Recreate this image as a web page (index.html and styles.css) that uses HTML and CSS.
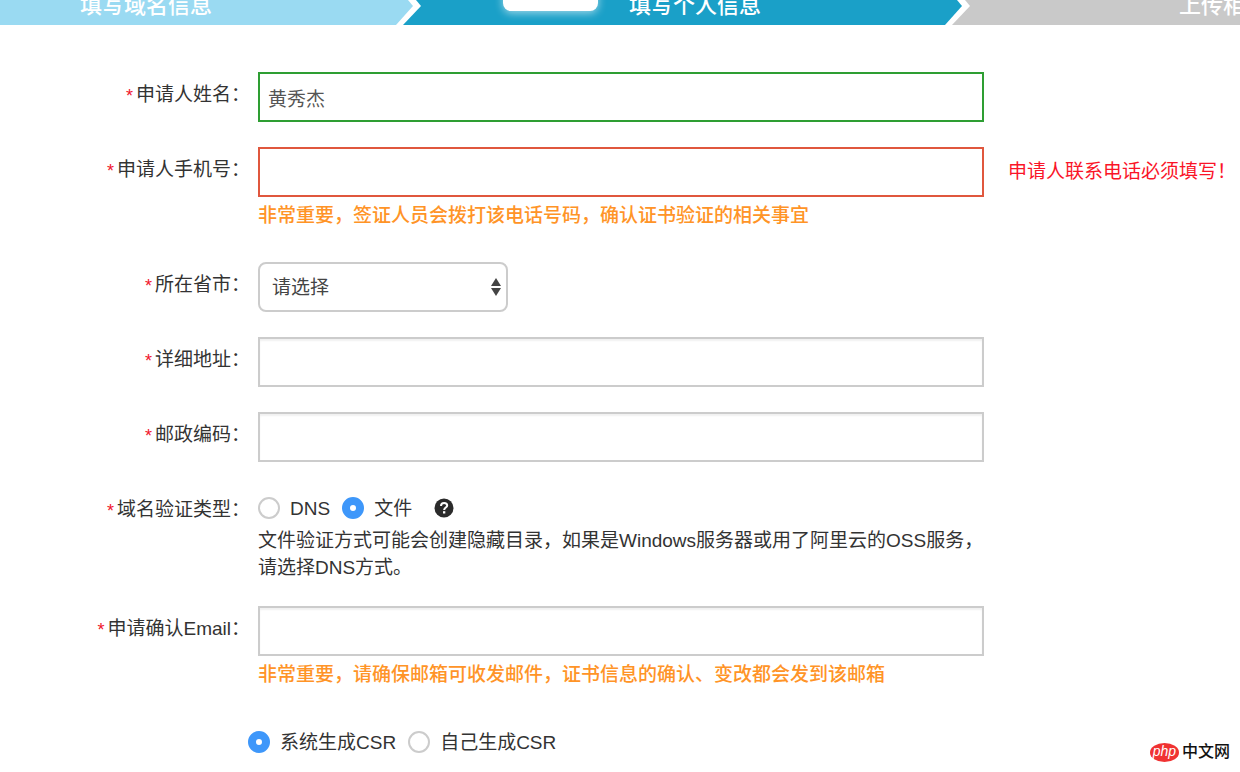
FILE: index.html
```html
<!DOCTYPE html>
<html lang="zh-CN">
<head>
  <meta charset="UTF-8">
  <meta name="viewport" content="width=device-width, initial-scale=1.0">
  <title>填写个人信息</title>
  <link rel="stylesheet" href="styles.css">
</head>
<body>

  <!-- 步骤条 -->
  <div class="steps">
    <div class="step step-done">填写域名信息</div>
    <svg class="arrow" viewBox="0 0 25 25" aria-hidden="true">
      <rect width="25" height="25" fill="#1aa0c8"/>
      <path d="M0 0H20L25 6L7 25H0Z" fill="#fff"/>
      <path d="M0 0H12L17 6L0 25Z" fill="#9adaf2"/>
    </svg>
    <div class="step step-current"><span class="bubble"></span>填写个人信息</div>
    <svg class="arrow" viewBox="0 0 25 25" aria-hidden="true">
      <rect width="25" height="25" fill="#c9c9c9"/>
      <path d="M0 0H20L25 6L7 25H0Z" fill="#fff"/>
      <path d="M0 0H12L17 6L0 25Z" fill="#1aa0c8"/>
    </svg>
    <div class="step step-next">上传相关信息</div>
  </div>

  <form class="form">
    <div class="row">
      <label class="label" for="name"><span class="star">*</span>申请人姓名：</label>
      <div class="field">
        <input type="text" class="input input-ok" id="name" value="黄秀杰">
      </div>
    </div>

    <div class="row">
      <label class="label" for="phone"><span class="star">*</span>申请人手机号：</label>
      <div class="field">
        <input type="tel" class="input input-error" id="phone">
        <p class="hint">非常重要，签证人员会拨打该电话号码，确认证书验证的相关事宜</p>
      </div>
      <div class="error">申请人联系电话必须填写！</div>
    </div>

    <div class="row">
      <label class="label" for="city"><span class="star">*</span>所在省市：</label>
      <div class="field">
        <div class="select-box">
          <select class="select" id="city">
            <option>请选择</option>
          </select>
          <svg class="select-arrows" viewBox="0 0 10 18" aria-hidden="true">
            <path d="M5 0L10 8H0ZM5 18L0 10H10Z" fill="#444"/>
          </svg>
        </div>
      </div>
    </div>

    <div class="row">
      <label class="label" for="address"><span class="star">*</span>详细地址：</label>
      <div class="field">
        <input type="text" class="input" id="address">
      </div>
    </div>

    <div class="row">
      <label class="label" for="zip"><span class="star">*</span>邮政编码：</label>
      <div class="field">
        <input type="text" class="input" id="zip">
      </div>
    </div>

    <div class="row">
      <div class="label" id="verifyLabel"><span class="star">*</span>域名验证类型：</div>
      <div class="field">
        <div class="radios" role="radiogroup" aria-labelledby="verifyLabel">
          <label class="radio"><input type="radio" name="verify">DNS</label>
          <label class="radio"><input type="radio" name="verify" checked>文件</label>
          <svg class="help" viewBox="0 0 20 20" aria-hidden="true">
            <circle cx="10" cy="10" r="9.5" fill="#2b2b2b"/>
            <path d="M7 8C7 6 8.300 5 10.100 5C12 5 13.200 6 13.200 7.500C13.200 9.600 10.200 9.500 10.200 12" fill="none" stroke="#fff" stroke-width="2"/>
            <rect x="9" y="13.200" width="2.300" height="2.300" fill="#fff"/>
          </svg>
        </div>
        <p class="desc">文件验证方式可能会创建隐藏目录，如果是Windows服务器或用了阿里云的OSS服务，<br>请选择DNS方式。</p>
      </div>
    </div>

    <div class="row">
      <label class="label" for="email"><span class="star">*</span>申请确认Email：</label>
      <div class="field">
        <input type="email" class="input" id="email">
        <p class="hint">非常重要，请确保邮箱可收发邮件，证书信息的确认、变改都会发到该邮箱</p>
      </div>
    </div>

    <div class="radios csr">
      <label class="radio"><input type="radio" name="csr" checked>系统生成CSR</label>
      <label class="radio"><input type="radio" name="csr">自己生成CSR</label>
    </div>
  </form>

  <!-- 水印 -->
  <div class="watermark"><span class="php">php</span>中文网</div>

</body>
</html>
```
FILE: styles.css
```css
* { box-sizing: border-box; }

body {
  margin: 0;
  background: #fff;
  color: #333;
  font-family: "Liberation Sans", "Noto Sans CJK SC", sans-serif;
  font-size: 19px;
  line-height: 27px;
}

p { margin: 0; }

/* 步骤条 */
.steps {
  display: grid;
  grid-template-columns: minmax(0, 396fr) 25px minmax(0, 524fr) 25px minmax(0, 270fr);
  height: 25px;
  overflow: hidden;
}

.step {
  position: relative;
  color: #fff;
  font-size: 22px;
  font-weight: 500;
  line-height: 12px;
  white-space: nowrap;
}

.step-done {
  padding-left: 80px;
  background: #9adaf2;
}

.step-current {
  padding-left: 208px;
  background: #1aa0c8;
}

.step-next {
  padding-left: 209px;
  background: #c9c9c9;
}

.arrow {
  display: block;
  width: 25px;
  height: 25px;
}

.bubble {
  position: absolute;
  top: -20px;
  left: 82px;
  width: 95px;
  height: 31px;
  border-radius: 8px;
  background: #fff;
  box-shadow: 0 2px 8px rgba(255, 255, 255, 0.6);
}

/* 表单 */
.form {
  display: flex;
  flex-direction: column;
  gap: 25px;
  padding-top: 47px;
}

.row {
  display: grid;
  grid-template-columns: 250px minmax(0, 726px) auto;
  column-gap: 8px;
  justify-content: start;
}

.label {
  padding-top: 9px;
  text-align: right;
  white-space: nowrap;
}

.star {
  margin-right: 3px;
  color: #f0142d;
  font-size: 18px;
  line-height: 20px;
  vertical-align: -1px;
}

.input {
  display: block;
  width: 100%;
  height: 50px;
  padding: 0 8px;
  border: 2px solid #ccc;
  border-radius: 0;
  outline: none;
  background: #fff;
  box-shadow: inset 0 2px 2px rgba(0, 0, 0, 0.06);
  color: #555;
  font: inherit;
}

.input-ok {
  border-color: #2e9e33;
  box-shadow: none;
}

.input-error {
  border-color: #e0573e;
  box-shadow: none;
}

.hint {
  padding: 5px 0 8px;
  color: #ff9427;
  font-weight: 500;
}

.error {
  padding: 11px 0 0 16px;
  color: #fa1428;
  white-space: nowrap;
}

.select-box {
  position: relative;
  width: 250px;
}

.select {
  display: block;
  width: 100%;
  height: 50px;
  padding: 0 30px 0 12px;
  border: 2px solid #ccc;
  border-radius: 8px;
  background: #fff;
  color: #444;
  font: inherit;
  appearance: none;
}

.select-arrows {
  position: absolute;
  top: 16px;
  right: 7px;
  width: 10px;
  height: 18px;
  pointer-events: none;
}

.radios {
  display: flex;
  align-items: center;
  gap: 12px;
  height: 40px;
  padding-top: 2px;
}

.radio {
  display: flex;
  align-items: center;
  gap: 10px;
}

.radio input {
  width: 22px;
  height: 22px;
  margin: 0;
  border: 2px solid #ccc;
  border-radius: 50%;
  background: #fff;
  appearance: none;
}

.radio input:checked {
  border: 8px solid #3e97fa;
}

.help {
  width: 20px;
  height: 20px;
  margin-left: 10px;
}

.desc {
  white-space: nowrap;
}

.csr {
  padding-left: 248px;
}

/* 水印 */
.watermark {
  position: absolute;
  right: 10px;
  bottom: 8px;
  display: flex;
  align-items: center;
  gap: 3px;
  color: #111;
  font-size: 16px;
  font-weight: 500;
  line-height: 24px;
}

.php {
  width: 29px;
  height: 19px;
  border-radius: 50%;
  background: #f03232;
  color: #fff;
  font-size: 14px;
  font-style: italic;
  line-height: 16px;
  text-align: center;
}
```
